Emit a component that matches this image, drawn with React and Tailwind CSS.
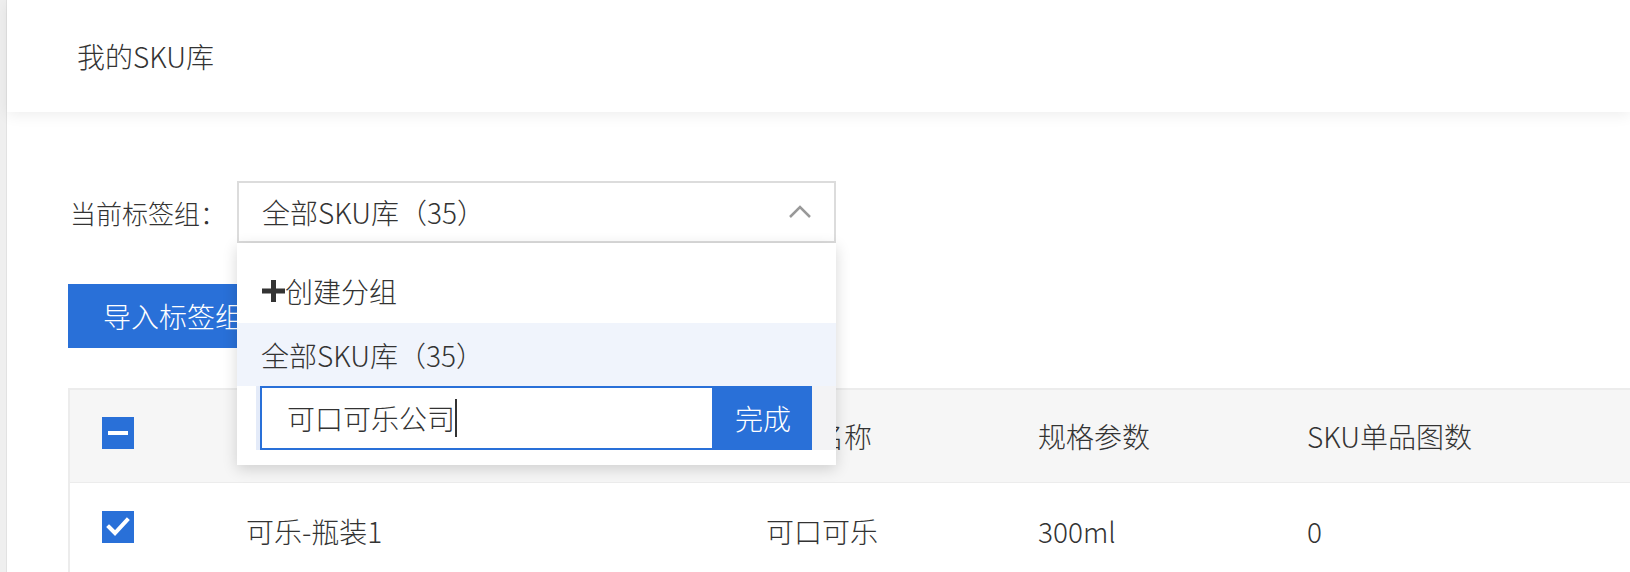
import { useState } from "react";

const rows = [
    { name: "可乐-瓶装1", brand: "可口可乐", spec: "300ml", pics: "0", checked: true },
];

const Checkbox = ({ state }) => (
    <div className="w-[32px] h-[32px] bg-[#2970d8] flex items-center justify-center">
        {state === "partial" && <div className="w-[20px] h-[4px] bg-white" />}
        {state === "checked" && (
            <svg width="24" height="20" viewBox="0 0 24 20">
                <polyline points="3,10 9,16 21,3" fill="none" stroke="white" strokeWidth="4" strokeLinecap="square" />
            </svg>
        )}
    </div>
);

const App = () => {
    const [groupName, setGroupName] = useState("可口可乐公司");

    return (
        <div className="min-h-screen h-[572px] overflow-hidden bg-white flex font-['Noto_Sans_CJK_SC',sans-serif] font-light text-[#333]">
            {/* left rail */}
            <div className="w-[7px] shrink-0 bg-[#efefef] border-r border-[#e2e2e2]" />

            <div className="flex-1 min-w-0">
                {/* Header */}
                <header className="relative z-10 h-[112px] bg-white flex items-center pl-[70px] text-[28px] shadow-[0_3px_14px_rgba(0,0,0,0.07)]">
                    我的SKU库
                </header>

                <main className="pl-[61px] pt-[69px]">
                    {/* Group selector */}
                    <div className="flex items-center h-[62px]">
                        <span className="w-[169px] pl-[2px] text-[26px]">当前标签组：</span>
                        <div className="relative z-20">
                            <div className="w-[599px] h-[62px] border-2 border-[#dcdcdc] bg-white flex items-center justify-between pl-[23px] pr-[22px]">
                                <span className="text-[28px]">全部SKU库（35）</span>
                                <svg width="24" height="14" viewBox="0 0 24 14">
                                    <polyline points="2,12 12,2 22,12" fill="none" stroke="#999" strokeWidth="2.5" />
                                </svg>
                            </div>

                            {/* Dropdown */}
                            <div className="absolute top-full left-0 w-full bg-white pt-[16px] pb-[15px] shadow-[0_4px_14px_rgba(0,0,0,0.16)]">
                                <div className="h-[64px] flex items-center pl-[25px] text-[28px]">
                                    <svg width="23" height="22" viewBox="0 0 23 22">
                                        <rect x="9" y="0" width="5" height="22" fill="#333" />
                                        <rect x="0" y="8.5" width="23" height="5" fill="#333" />
                                    </svg>
                                    创建分组
                                </div>
                                <div className="h-[63px] flex items-center pl-[24px] bg-[#f0f4fc] text-[28px]">
                                    全部SKU库（35）
                                </div>
                                <div className="flex pl-[19px] pr-[24px] bg-white">
                                    <div className="flex flex-1 pl-[4px] bg-[#e4ebf9]">
                                        <div className="flex-1 h-[64px] border-2 border-[#2970d8] bg-white flex items-center pl-[25px]">
                                            <input
                                                value={groupName}
                                                onChange={(e) => setGroupName(e.target.value)}
                                                className="w-[168px] outline-none text-[28px] text-[#333] bg-transparent font-['Noto_Sans_CJK_SC',sans-serif] font-light"
                                            />
                                            <span className="w-[2px] h-[38px] bg-[#333]" />
                                        </div>
                                        <button className="w-[98px] h-[64px] bg-[#2970d8] text-white text-[28px]">完成</button>
                                    </div>
                                    <div className="w-[24px] -mr-[24px] bg-[#f3f3f5]" />
                                </div>
                            </div>
                        </div>
                    </div>

                    <button className="mt-[41px] h-[64px] w-[210px] bg-[#2970d8] text-white text-[28px] text-left pl-[35px]">
                        导入标签组
                    </button>

                    {/* Table */}
                    <div className="mt-[40px] border-t-2 border-l-2 border-[#ececec]">
                        <div className="grid grid-cols-[176px_520px_272px_269px_1fr] h-[93px] items-center bg-[#f6f6f6] text-[28px] border-b border-[#ececec]">
                            <div className="pl-[32px] -mt-[6px]">
                                <Checkbox state="partial" />
                            </div>
                            <div>SKU名称</div>
                            <div className="-ml-[6px]">品牌名称</div>
                            <div>规格参数</div>
                            <div>SKU单品图数</div>
                        </div>
                        {rows.map((r) => (
                            <div key={r.name} className="grid grid-cols-[176px_520px_272px_269px_1fr] h-[96px] items-center text-[28px] border-b border-[#ececec]">
                                <div className="pl-[32px] -mt-[8px]">
                                    <Checkbox state={r.checked ? "checked" : "none"} />
                                </div>
                                <div>{r.name}</div>
                                <div>{r.brand}</div>
                                <div>{r.spec}</div>
                                <div>{r.pics}</div>
                            </div>
                        ))}
                    </div>
                </main>
            </div>
        </div>
    );
};

export default App;
